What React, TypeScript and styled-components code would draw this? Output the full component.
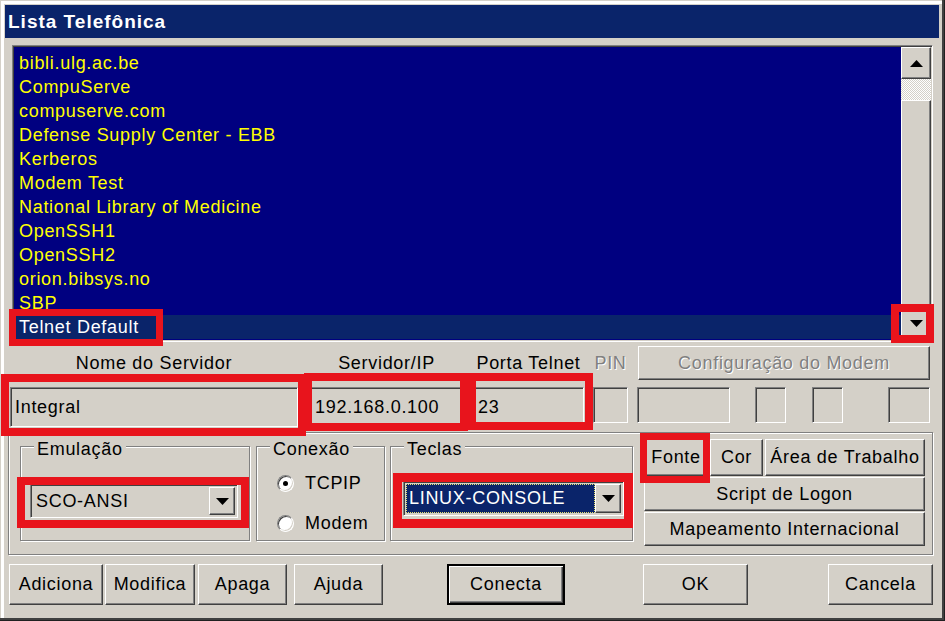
import React from "react";
import styled, { createGlobalStyle, css } from "styled-components";

const GlobalStyle = createGlobalStyle`
  html, body { margin: 0; padding: 0; background: #d4d0c8; }
  body { font-family: "Liberation Sans", Arial, sans-serif; }
  * { box-sizing: border-box; }
`;

const FACE = "#d4d0c8";

const raised = css`
  background: ${FACE};
  border: 1px solid;
  border-color: #fff #404040 #404040 #fff;
  box-shadow: inset -1px -1px #808080, inset 1px 1px ${FACE};
`;

const sunken = css`
  border: 1px solid;
  border-color: #808080 #fff #fff #808080;
  box-shadow: inset 1px 1px #404040, inset -1px -1px ${FACE};
`;

const etched = css`
  border: 1px solid #808080;
  box-shadow: inset 1px 1px #fff, 1px 1px #fff;
`;

const Window = styled.div`
  position: relative;
  width: 945px;
  height: 621px;
  padding: 5px 6px 6px 5px;
  background: ${FACE};
  font-size: 18px;
  letter-spacing: 0.7px;
  color: #000;
  display: flex;
  flex-direction: column;
  box-shadow: inset -1px -1px #202020, inset -3px -3px #404040, inset 1px 1px ${FACE},
    inset 4px 4px #fff;
  overflow: hidden;
`;

const TitleBar = styled.div`
  height: 33px;
  background: #0a246a;
  color: #fff;
  font-weight: bold;
  font-size: 19px;
  letter-spacing: 1px;
  padding-left: 3px;
  display: flex;
  align-items: center;
`;

const ListBox = styled.div`
  margin: 7px 0 0 7px;
  width: 921px;
  height: 297px;
  display: flex;
  border: 1px solid;
  border-color: #808080 #fff #fff #808080;
  box-shadow: inset 1px 1px #404040, inset -1px -1px ${FACE};
  padding: 1px;
`;

const Items = styled.div`
  flex: 1;
  background: #000080;
  padding-top: 4px;
  display: flex;
  flex-direction: column;
`;

const Item = styled.div<{ $selected?: boolean }>`
  height: 24px;
  line-height: 24px;
  padding-left: 5px;
  color: ${(p) => (p.$selected ? "#fff" : "#ffff00")};
  background: ${(p) => (p.$selected ? "#0a246a" : "transparent")};
  white-space: nowrap;
`;

const ScrollBar = styled.div`
  width: 30px;
  display: flex;
  flex-direction: column;
  background: ${FACE};
`;

const ScrollBtn = styled.div<{ $h: number }>`
  ${raised};
  height: ${(p) => p.$h}px;
  display: flex;
  align-items: center;
  justify-content: center;
`;

const Track = styled.div<{ $h: number }>`
  height: ${(p) => p.$h}px;
  background: repeating-conic-gradient(#fff 0 25%, ${FACE} 0 50%) 0 0 / 2px 2px;
`;

const Thumb = styled.div<{ $h: number }>`
  ${raised};
  height: ${(p) => p.$h}px;
`;

const Row = styled.div<{ $top: number; $h: number }>`
  display: flex;
  align-items: flex-start;
  margin-top: ${(p) => p.$top}px;
  height: ${(p) => p.$h}px;
`;

const Label = styled.div<{ $w: number; $ml: number; $disabled?: boolean }>`
  width: ${(p) => p.$w}px;
  margin-left: ${(p) => p.$ml}px;
  height: 34px;
  line-height: 34px;
  text-align: center;
  white-space: nowrap;
  color: ${(p) => (p.$disabled ? "#808080" : "#000")};
  text-shadow: ${(p) => (p.$disabled ? "1px 1px #fff" : "none")};
`;

const Button = styled.div<{
  $w: number;
  $h: number;
  $ml?: number;
  $disabled?: boolean;
  $default?: boolean;
}>`
  ${raised};
  width: ${(p) => p.$w}px;
  height: ${(p) => p.$h}px;
  margin-left: ${(p) => p.$ml ?? 0}px;
  display: flex;
  align-items: center;
  justify-content: center;
  white-space: nowrap;
  flex-shrink: 0;
  color: ${(p) => (p.$disabled ? "#808080" : "#000")};
  text-shadow: ${(p) => (p.$disabled ? "1px 1px #fff" : "none")};
  ${(p) =>
    p.$default &&
    css`
      border: 2px solid #000;
      box-shadow: inset 1px 1px #fff, inset -1px -1px #404040, inset -2px -2px #808080;
    `}
`;

const Field = styled.div<{ $w: number; $h: number; $ml: number }>`
  ${sunken};
  background: ${FACE};
  width: ${(p) => p.$w}px;
  height: ${(p) => p.$h}px;
  margin-left: ${(p) => p.$ml}px;
  padding-left: 4px;
  display: flex;
  align-items: center;
  flex-shrink: 0;
`;

const Panel = styled.div`
  ${etched};
  margin: 6px 0 0 3px;
  width: 925px;
  height: 123px;
  display: flex;
  align-items: flex-start;
  padding-left: 11px;
`;

const GroupBox = styled.div<{ $w: number; $ml: number; $pt: number; $pl: number }>`
  ${etched};
  position: relative;
  margin-top: 13px;
  margin-left: ${(p) => p.$ml}px;
  width: ${(p) => p.$w}px;
  height: 95px;
  padding: ${(p) => p.$pt}px 0 0 ${(p) => p.$pl}px;
  flex-shrink: 0;
`;

const Caption = styled.span`
  position: absolute;
  top: -8px;
  left: 13px;
  padding: 0 3px;
  line-height: 20px;
  background: ${FACE};
`;

const Combo = styled.div<{ $w: number; $h: number }>`
  ${sunken};
  width: ${(p) => p.$w}px;
  height: ${(p) => p.$h}px;
  padding: 2px;
  display: flex;
  background: ${FACE};
`;

const ComboText = styled.div<{ $selected?: boolean }>`
  flex: 1;
  display: flex;
  align-items: center;
  padding-left: 3px;
  ${(p) =>
    p.$selected &&
    css`
      background: #0a246a;
      color: #fff;
      outline: 1px dotted #e8e070;
      outline-offset: -1px;
    `}
`;

const ComboBtn = styled.div`
  ${raised};
  width: 26px;
  display: flex;
  align-items: center;
  justify-content: center;
`;

const RadioRow = styled.div<{ $mt: number }>`
  display: flex;
  align-items: center;
  height: 24px;
  margin-top: ${(p) => p.$mt}px;
  gap: 11px;
`;

const RadioCircle = styled.span<{ $checked?: boolean }>`
  width: 17px;
  height: 17px;
  border-radius: 50%;
  background: #fff;
  border: 1px solid;
  border-color: #808080 #fff #fff #808080;
  box-shadow: inset 1px 1px #404040, inset -1px -1px ${FACE};
  display: flex;
  align-items: center;
  justify-content: center;
  &::after {
    content: "";
    width: 5px;
    height: 5px;
    border-radius: 50%;
    background: ${(p) => (p.$checked ? "#000" : "transparent")};
  }
`;

const ButtonColumn = styled.div`
  margin: 6px 0 0 11px;
  width: 281px;
  display: flex;
  flex-direction: column;
  gap: 1px;
`;

const ButtonLine = styled.div`
  display: flex;
  gap: 2px;
`;

const BottomRow = styled.div`
  display: flex;
  margin: 9px 0 0 4px;
`;

const Annotation = styled.div<{ $x: number; $y: number; $w: number; $h: number; $t?: number }>`
  position: absolute;
  left: ${(p) => p.$x}px;
  top: ${(p) => p.$y}px;
  width: ${(p) => p.$w}px;
  height: ${(p) => p.$h}px;
  border: ${(p) => p.$t ?? 7}px solid #e8141c;
  pointer-events: none;
`;

const Arrow = ({ up }: { up?: boolean }) => (
  <svg width="13" height="7" viewBox="0 0 13 7">
    <polygon points={up ? "6.5,0 13,7 0,7" : "0,0 13,0 6.5,7"} fill="#000" />
  </svg>
);

const entries = [
  "bibli.ulg.ac.be",
  "CompuServe",
  "compuserve.com",
  "Defense Supply Center - EBB",
  "Kerberos",
  "Modem Test",
  "National Library of Medicine",
  "OpenSSH1",
  "OpenSSH2",
  "orion.bibsys.no",
  "SBP",
  "Telnet Default",
];

export default function App() {
  return (
    <>
      <GlobalStyle />
      <Window>
        <TitleBar>Lista Telefônica</TitleBar>

        <ListBox>
          <Items>
            {entries.map((e, i) => (
              <Item key={e} $selected={i === entries.length - 1}>
                {e}
              </Item>
            ))}
          </Items>
          <ScrollBar>
            <ScrollBtn $h={32}>
              <Arrow up />
            </ScrollBtn>
            <Track $h={21} />
            <Thumb $h={207} />
            <ScrollBtn $h={33}>
              <Arrow />
            </ScrollBtn>
          </ScrollBar>
        </ListBox>

        <Row $top={4} $h={34}>
          <Label $w={288} $ml={5}>Nome do Servidor</Label>
          <Label $w={153} $ml={12}>Servidor/IP</Label>
          <Label $w={111} $ml={10}>Porta Telnet</Label>
          <Label $w={35} $ml={9} $disabled>PIN</Label>
          <Button $w={292} $h={34} $ml={10} $disabled>
            Configuração do Modem
          </Button>
        </Row>

        <Row $top={7} $h={39}>
          <Field $w={288} $h={40} $ml={5}>Integral</Field>
          <Field $w={153} $h={40} $ml={12}>192.168.0.100</Field>
          <Field $w={111} $h={40} $ml={10}>23</Field>
          <Field $w={35} $h={36} $ml={9} />
          <Field $w={93} $h={36} $ml={9} />
          <Field $w={31} $h={36} $ml={25} />
          <Field $w={31} $h={36} $ml={26} />
          <Field $w={42} $h={36} $ml={45} />
        </Row>

        <Panel>
          <GroupBox $w={230} $ml={0} $pt={37} $pl={9}>
            <Caption>Emulação</Caption>
            <Combo $w={208} $h={34}>
              <ComboText>SCO-ANSI</ComboText>
              <ComboBtn>
                <Arrow />
              </ComboBtn>
            </Combo>
          </GroupBox>
          <GroupBox $w={129} $ml={6} $pt={24} $pl={20}>
            <Caption>Conexão</Caption>
            <RadioRow $mt={0}>
              <RadioCircle $checked />
              TCPIP
            </RadioRow>
            <RadioRow $mt={16}>
              <RadioCircle />
              Modem
            </RadioRow>
          </GroupBox>
          <GroupBox $w={243} $ml={5} $pt={34} $pl={12}>
            <Caption>Teclas</Caption>
            <Combo $w={221} $h={35}>
              <ComboText $selected>LINUX-CONSOLE</ComboText>
              <ComboBtn>
                <Arrow />
              </ComboBtn>
            </Combo>
          </GroupBox>
          <ButtonColumn>
            <ButtonLine>
              <Button $w={64} $h={37}>Fonte</Button>
              <Button $w={53} $h={37}>Cor</Button>
              <Button $w={160} $h={37}>Área de Trabalho</Button>
            </ButtonLine>
            <Button $w={281} $h={34}>Script de Logon</Button>
            <Button $w={281} $h={34}>Mapeamento Internacional</Button>
          </ButtonColumn>
        </Panel>

        <BottomRow>
          <Button $w={94} $h={41}>Adiciona</Button>
          <Button $w={90} $h={41} $ml={2}>Modifica</Button>
          <Button $w={89} $h={41} $ml={3}>Apaga</Button>
          <Button $w={89} $h={41} $ml={7}>Ajuda</Button>
          <Button $w={118} $h={41} $ml={64} $default>Conecta</Button>
          <Button $w={105} $h={41} $ml={78}>OK</Button>
          <Button $w={105} $h={41} $ml={80}>Cancela</Button>
        </BottomRow>

        <Annotation $x={9} $y={309} $w={154} $h={37} />
        <Annotation $x={891} $y={304} $w={43} $h={39} $t={8} />
        <Annotation $x={1} $y={374} $w={305} $h={62} $t={8} />
        <Annotation $x={304} $y={373} $w={164} $h={58} $t={8} />
        <Annotation $x={468} $y={373} $w={125} $h={57} $t={8} />
        <Annotation $x={17} $y={477} $w={232} $h={51} $t={8} />
        <Annotation $x={393} $y={473} $w={240} $h={55} $t={9} />
        <Annotation $x={640} $y={433} $w={70} $h={50} />
      </Window>
    </>
  );
}
